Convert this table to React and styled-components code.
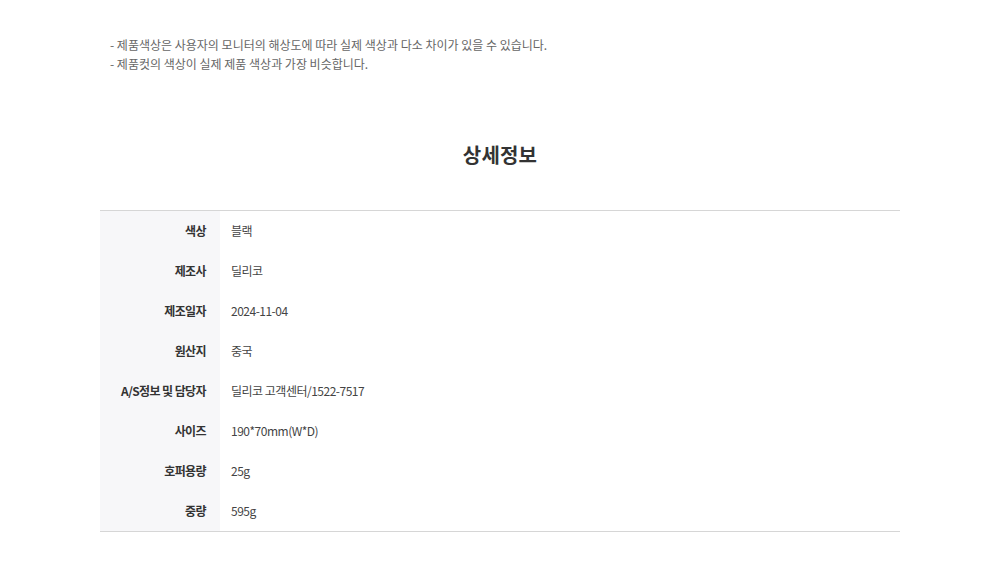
import React from "react";
import styled, { createGlobalStyle } from "styled-components";

const Global = createGlobalStyle`
  html, body { margin: 0; padding: 0; background: #fff; }
  body { font-family: "Noto Sans CJK KR", "Noto Sans", sans-serif; color: #333; }
`;

const Page = styled.div`
  width: 1000px;
  padding: 35px 100px 40px;
  box-sizing: border-box;
`;

const Notes = styled.ul`
  list-style: none;
  margin: 0;
  padding: 0 0 0 10px;
  font-size: 12px;
  line-height: 19px;
  color: #666;
  letter-spacing: 0;
`;

const Title = styled.h2`
  margin: 67px 0 40px;
  text-align: center;
  font-size: 20px;
  line-height: 30px;
  font-weight: 700;
  color: #333;
  letter-spacing: 0.2px;
`;

const Table = styled.div`
  display: grid;
  grid-template-columns: 120px 1fr;
  border-top: 1px solid #d6d6d6;
  border-bottom: 1px solid #d6d6d6;
`;

const Label = styled.div`
  background: #f7f7f9;
  height: 40px;
  box-sizing: border-box;
  padding-bottom: 2px;
  display: flex;
  align-items: center;
  justify-content: flex-end;
  padding-right: 14px;
  font-size: 12px;
  font-weight: 700;
  color: #333;
  letter-spacing: -0.6px;
`;

const Value = styled.div`
  height: 40px;
  box-sizing: border-box;
  padding-bottom: 2px;
  display: flex;
  align-items: center;
  padding-left: 11px;
  font-size: 12px;
  color: #444;
  letter-spacing: -0.5px;
`;

const rows = [
  ["색상", "블랙"],
  ["제조사", "딜리코"],
  ["제조일자", "2024-11-04"],
  ["원산지", "중국"],
  ["A/S정보 및 담당자", "딜리코 고객센터/1522-7517"],
  ["사이즈", "190*70mm(W*D)"],
  ["호퍼용량", "25g"],
  ["중량", "595g"],
];

export default function App() {
  return (
    <Page>
      <Global />
      <Notes>
        <li>- 제품색상은 사용자의 모니터의 해상도에 따라 실제 색상과 다소 차이가 있을 수 있습니다.</li>
        <li>- 제품컷의 색상이 실제 제품 색상과 가장 비슷합니다.</li>
      </Notes>
      <Title>상세정보</Title>
      <Table>
        {rows.map(([k, v]) => (
          <React.Fragment key={k}>
            <Label>{k}</Label>
            <Value>{v}</Value>
          </React.Fragment>
        ))}
      </Table>
    </Page>
  );
}
